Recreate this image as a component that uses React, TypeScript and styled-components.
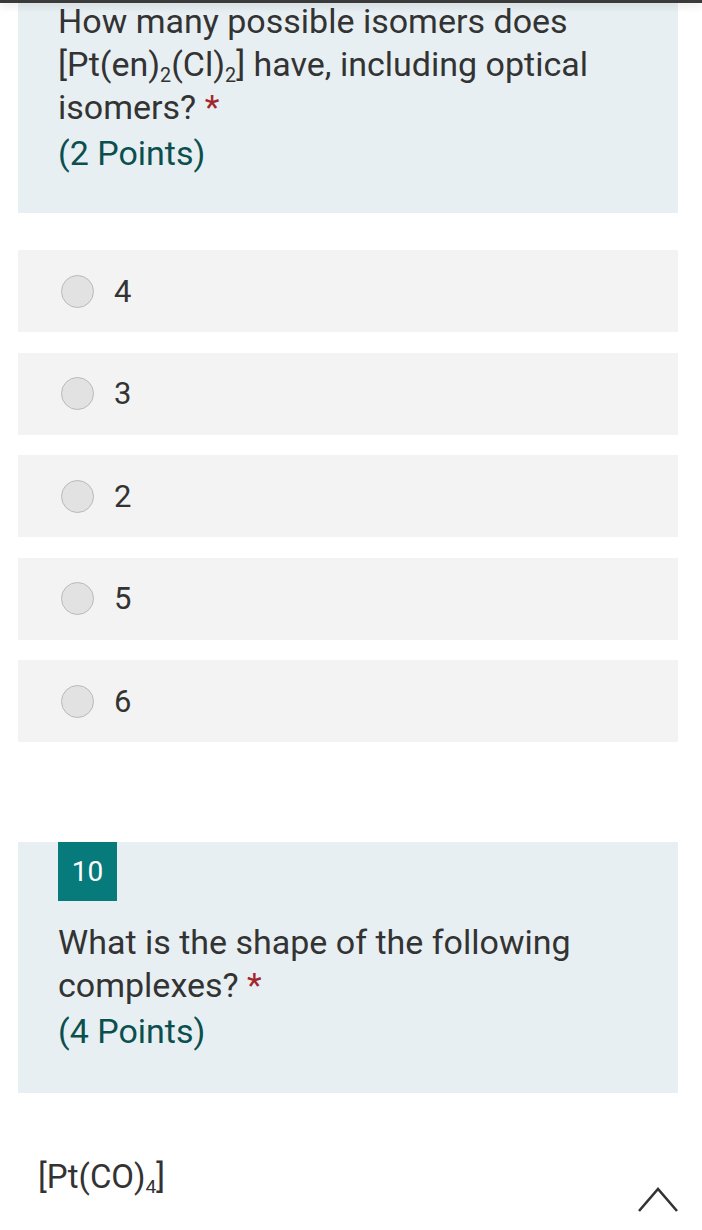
import styled, { createGlobalStyle } from "styled-components";

const GlobalStyle = createGlobalStyle`
  html, body {
    margin: 0;
    padding: 0;
    background: #fff;
  }
  body {
    font-family: Roboto, "Noto Sans", "Liberation Sans", sans-serif;
    color: #333;
  }
`;

const options = ["4", "3", "2", "5", "6"];

const App = () => {
  return (
    <Page>
      <GlobalStyle />
      <TopShade />

      <QuestionCard $first>
        <QuestionTitle>
          How many possible isomers does [Pt(en)<Sub>2</Sub>(Cl)<Sub>2</Sub>] have,
          including optical isomers? <Required>*</Required>
        </QuestionTitle>
        <Points>(2 Points)</Points>
      </QuestionCard>

      <OptionList>
        {options.map((opt) => (
          <OptionRow key={opt}>
            <Radio />
            <OptionLabel>{opt}</OptionLabel>
          </OptionRow>
        ))}
      </OptionList>

      <QuestionCard>
        <Badge>10</Badge>
        <QuestionTitle>
          What is the shape of the following complexes? <Required>*</Required>
        </QuestionTitle>
        <Points>(4 Points)</Points>
      </QuestionCard>

      <SubItem>
        [Pt(CO)<Sub>4</Sub>]
      </SubItem>

      <BackToTop aria-label="Back to top">
        <svg width="40" height="26" viewBox="0 0 40 26">
          <polyline
            points="1,24 20,2 39,24"
            fill="none"
            stroke="#333"
            strokeWidth="2.6"
          />
        </svg>
      </BackToTop>
    </Page>
  );
};

export default App;

// Стили
const Page = styled.div`
  width: 702px;
  min-height: 1230px;
  padding-bottom: 80px;
`;

const TopShade = styled.div`
  position: fixed;
  top: 0;
  left: 0;
  right: 0;
  height: 3px;
  background: #3a3a3a;
  box-shadow: 0 2px 8px rgba(0, 0, 0, 0.18);
  z-index: 5;
`;

const QuestionCard = styled.section<{ $first?: boolean }>`
  margin: ${(p) => (p.$first ? "0 24px 0 18px" : "100px 24px 0 18px")};
  padding: ${(p) => (p.$first ? "0 40px 38px 40px" : "0 40px 40px 40px")};
  background: #e7eff2;
`;

const QuestionTitle = styled.div`
  font-size: 34px;
  line-height: 43px;
  color: #333;
  padding-right: 10px;
`;

const Sub = styled.sub`
  font-size: 0.58em;
  line-height: 0;
  vertical-align: -0.28em;
`;

const Required = styled.span`
  color: #a4262c;
`;

const Points = styled.div`
  margin-top: 3px;
  font-size: 34px;
  line-height: 43px;
  color: #0c4f4f;
`;

const Badge = styled.div`
  width: 59px;
  height: 59px;
  margin-bottom: 20px;
  display: flex;
  align-items: center;
  justify-content: center;
  background: #077a7c;
  color: #fff;
  font-size: 28px;
`;

const OptionList = styled.div`
  margin: 37px 24px 0 18px;
  display: flex;
  flex-direction: column;
  gap: 20.5px;
`;

const OptionRow = styled.div`
  height: 82px;
  display: flex;
  align-items: center;
  padding-left: 43px;
  background: #f3f3f3;
`;

const Radio = styled.span`
  width: 33px;
  height: 33px;
  border-radius: 50%;
  box-sizing: border-box;
  border: 1.5px solid #b9b9b9;
  background: #e2e2e2;
  flex-shrink: 0;
`;

const OptionLabel = styled.span`
  margin-left: 20px;
  font-size: 31px;
  color: #333;
`;

const SubItem = styled.div`
  margin: 62px 0 0 38px;
  font-size: 33px;
  line-height: 43px;
  color: #333;
`;

const BackToTop = styled.button`
  position: fixed;
  right: 24px;
  top: 1187px;
  padding: 0;
  border: none;
  background: transparent;
  line-height: 0;
  cursor: pointer;
`;
